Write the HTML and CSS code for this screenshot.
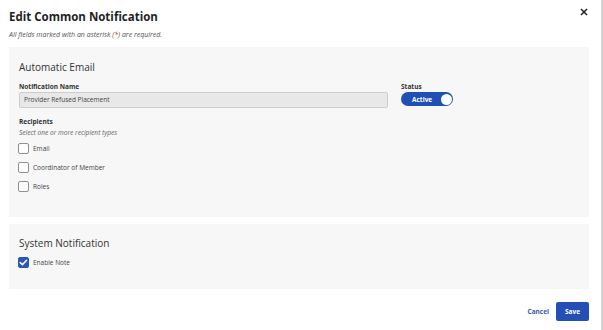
FILE: index.html
```html
<!DOCTYPE html>
<html lang="en">
<head>
<meta charset="utf-8">
<title>Edit Common Notification</title>
<link rel="stylesheet" href="styles.css">
</head>
<body>
<div class="modal">
  <div class="header">
    <h1 class="title">Edit Common Notification</h1>
    <button class="close" type="button" aria-label="Close">
      <svg class="close-icon" viewBox="0 0 8 8" width="8" height="8"><path d="M1 1 L7 7 M7 1 L1 7" /></svg>
    </button>
  </div>
  <p class="required-note">All fields marked with an asterisk (<span class="asterisk">*</span>) are required.</p>

  <section class="panel panel-email">
    <h2 class="panel-title">Automatic Email</h2>
    <div class="name-row">
      <div class="field field-name">
        <div class="field-label">Notification Name</div>
        <div class="text-input">Provider Refused Placement</div>
      </div>
      <div class="field field-status">
        <div class="field-label">Status</div>
        <div class="toggle"><span class="toggle-text">Active</span><span class="toggle-knob"></span></div>
      </div>
    </div>
    <div class="field-label recipients-label">Recipients</div>
    <div class="hint">Select one or more recipient types</div>
    <ul class="checklist">
      <li class="check-item"><span class="checkbox"></span><span class="check-text">Email</span></li>
      <li class="check-item"><span class="checkbox"></span><span class="check-text">Coordinator of Member</span></li>
      <li class="check-item"><span class="checkbox"></span><span class="check-text">Roles</span></li>
    </ul>
  </section>

  <section class="panel panel-system">
    <h2 class="panel-title">System Notification</h2>
    <ul class="checklist checklist-system">
      <li class="check-item"><span class="checkbox checked"><svg viewBox="0 0 11 11" width="11" height="11"><polyline points="2.3,5.6 4.4,7.7 8.6,3.3" /></svg></span><span class="check-text">Enable Note</span></li>
    </ul>
  </section>

  <div class="footer">
    <button class="btn-link" type="button">Cancel</button>
    <button class="btn-primary" type="button">Save</button>
  </div>
</div>
</body>
</html>
```

FILE: styles.css
```css
* { box-sizing: border-box; }

html, body {
  margin: 0;
  padding: 0;
  background: #ffffff;
}

body {
  font-family: "Open Sans", "Noto Sans", sans-serif;
  color: #333333;
}

.modal {
  width: 603px;
  height: 330px;
  padding: 0 12px 0 9px;
  border-right: 2px solid #d4d4d4;
  background: #ffffff;
}

.header {
  display: flex;
  justify-content: space-between;
  align-items: flex-start;
  padding-top: 9px;
}

.title {
  margin: 0;
  font-size: 11.5px;
  line-height: 16px;
  font-weight: 700;
  color: #1f1f1f;
}

.close {
  margin: -1px 1px 0 0;
  padding: 0;
  border: 0;
  background: none;
  width: 8px;
  height: 8px;
  display: flex;
}

.close-icon path {
  stroke: #262626;
  stroke-width: 1.6;
  fill: none;
}

.required-note {
  margin: 5px 0 0 0;
  font-size: 7px;
  line-height: 10px;
  font-style: italic;
  color: #555555;
}

.asterisk { color: #c0392b; }

.panel {
  background: #f7f7f7;
  padding-left: 10px;
  padding-right: 10px;
}

.panel-email {
  margin-top: 7px;
  padding-top: 13px;
  height: 170px;
}

.panel-system {
  margin-top: 7px;
  padding-top: 12px;
  height: 65px;
}

.panel-title {
  margin: 0;
  font-size: 10px;
  line-height: 14px;
  font-weight: 400;
  color: #333333;
}

.name-row {
  display: flex;
  gap: 13px;
  margin-top: 8px;
}

.field-name { width: 369px; }

.field-label {
  font-size: 6.5px;
  line-height: 9px;
  font-weight: 700;
  color: #333333;
}

.text-input {
  margin-top: 1px;
  height: 16px;
  border: 1px solid #cccccc;
  border-radius: 2px;
  background: #e8e8e8;
  font-size: 6.5px;
  line-height: 14px;
  padding-left: 4px;
  color: #444444;
}

.toggle {
  margin-top: 1px;
  width: 52px;
  height: 14px;
  border-radius: 7px;
  background: #2150b4;
  display: flex;
  align-items: center;
  justify-content: space-between;
  padding: 0 1.5px 0 11px;
}

.toggle-text {
  font-size: 6.5px;
  font-weight: 700;
  color: #ffffff;
  line-height: 9px;
}

.toggle-knob {
  width: 11px;
  height: 11px;
  border-radius: 50%;
  background: #ffffff;
}

.recipients-label { margin-top: 9px; }

.hint {
  margin-top: 3px;
  font-size: 6.6px;
  line-height: 8px;
  font-style: italic;
  color: #666666;
}

.checklist {
  list-style: none;
  margin: 1.5px 0 0 0;
  padding: 0;
}

.checklist-system { margin-top: 3px; }

.check-item {
  height: 19px;
  display: flex;
  align-items: center;
  gap: 4px;
}

.checkbox {
  width: 11px;
  height: 11px;
  border: 1px solid #8f8f8f;
  border-radius: 2px;
  background: #ffffff;
  display: flex;
  flex: none;
  margin-left: -1px;
}

.checkbox.checked {
  background: #2a56b8;
  border-color: #2a56b8;
}

.checkbox svg {
  margin: -1px;
}

.checkbox svg polyline {
  fill: none;
  stroke: #ffffff;
  stroke-width: 1.6;
  stroke-linecap: round;
  stroke-linejoin: round;
}

.check-text {
  font-size: 6.5px;
  line-height: 9px;
  color: #444444;
}

.footer {
  margin-top: 13px;
  display: flex;
  justify-content: flex-end;
  align-items: center;
  gap: 7px;
}

.btn-link {
  border: 0;
  background: none;
  padding: 0;
  font-family: inherit;
  font-size: 6.5px;
  font-weight: 700;
  color: #3557b0;
}

.btn-primary {
  width: 33px;
  height: 19px;
  border: 0;
  border-radius: 2px;
  background: #2450b6;
  font-family: inherit;
  font-size: 6.5px;
  font-weight: 700;
  color: #ffffff;
  padding: 0;
}
```
